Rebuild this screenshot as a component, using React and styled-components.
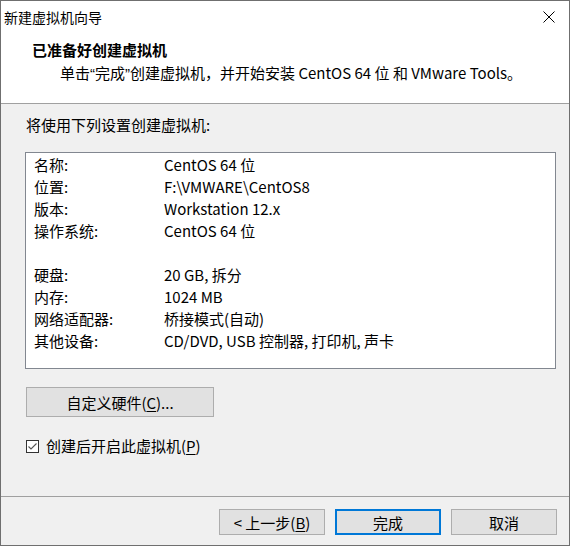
import React, { useState } from "react";
import styled, { createGlobalStyle } from "styled-components";

const GlobalStyle = createGlobalStyle`
  html, body {
    margin: 0;
    padding: 0;
    background: #f0f0f0;
  }
  * {
    box-sizing: border-box;
  }
`;

const FONT = `"Noto Sans CJK SC", "Noto Sans", sans-serif`;

const Window = styled.div`
  width: 570px;
  height: 546px;
  display: flex;
  flex-direction: column;
  border: 1px solid #6f6f6f;
  background: #f0f0f0;
  font-family: ${FONT};
  color: #000;
  overflow: hidden;
`;

const TitleBar = styled.div`
  height: 31px;
  flex: none;
  display: flex;
  align-items: center;
  justify-content: space-between;
  background: #fff;
  padding-left: 3px;
  font-size: 14px;
`;

const CloseButton = styled.div`
  width: 46px;
  height: 31px;
  display: flex;
  align-items: center;
  justify-content: center;
  margin-right: -3px;
`;

const Header = styled.div`
  height: 72px;
  flex: none;
  background: #fff;
  border-bottom: 1px solid #a0a0a0;
  padding: 7px 0 0 31px;
`;

const Heading = styled.div`
  font-size: 15px;
  font-weight: bold;
  line-height: 22px;
`;

const SubHeading = styled.div`
  font-size: 15px;
  line-height: 22px;
  padding-left: 28px;
  margin-top: 1px;
`;

const Quote = styled.span`
  font-family: "Liberation Sans", sans-serif;
`;

const Body = styled.div`
  flex: 1;
  display: flex;
  flex-direction: column;
  padding: 10px 13px 0 24px;
  font-size: 15px;
`;

const Intro = styled.div`
  line-height: 22px;
  padding-left: 1px;
`;

const SummaryBox = styled.div`
  margin-top: 16px;
  height: 217px;
  background: #fff;
  border: 1px solid #828790;
  padding: 1px 0 0 8px;
`;

const Row = styled.div`
  display: grid;
  grid-template-columns: 130px 1fr;
  height: 22px;
  line-height: 22px;
  white-space: nowrap;
`;

const Spacer = styled.div`
  height: 22px;
`;

const PushButton = styled.button`
  font-family: ${FONT};
  font-size: 15px;
  color: #000;
  background: #e1e1e1;
  border: ${({ $primary }) => ($primary ? "2px solid #0078d7" : "1px solid #adadad")};
  width: ${({ $width }) => $width}px;
  height: ${({ $height }) => $height || 26}px;
  padding: 0;
  display: flex;
  align-items: center;
  justify-content: center;
  line-height: 1;
  white-space: pre;
`;

const CustomRow = styled.div`
  margin-top: 18px;
  padding-left: 1px;
`;

const CheckRow = styled.label`
  margin-top: 18px;
  padding-left: 1px;
  display: flex;
  align-items: center;
  gap: 7px;
  line-height: 22px;
`;

const CheckBox = styled.span`
  width: 13px;
  height: 13px;
  border: 1px solid #333;
  background: #fff;
  display: flex;
  align-items: center;
  justify-content: center;
`;

const Footer = styled.div`
  height: 49px;
  flex: none;
  border-top: 1px solid #a0a0a0;
  display: flex;
  justify-content: flex-end;
  align-items: flex-start;
  padding: 12px 12px 0 0;
  gap: 10px;
`;

const Key = styled.u`
  text-underline-offset: 2px;
`;

const rows = [
  ["名称:", "CentOS 64 位"],
  ["位置:", "F:\\VMWARE\\CentOS8"],
  ["版本:", "Workstation 12.x"],
  ["操作系统:", "CentOS 64 位"],
  null,
  ["硬盘:", "20 GB, 拆分"],
  ["内存:", "1024 MB"],
  ["网络适配器:", "桥接模式(自动)"],
  ["其他设备:", "CD/DVD, USB 控制器, 打印机, 声卡"],
];

export default function App() {
  const [powerOn, setPowerOn] = useState(true);

  return (
    <>
      <GlobalStyle />
      <Window>
        <TitleBar>
          <span>新建虚拟机向导</span>
          <CloseButton>
            <svg width="12" height="12" viewBox="0 0 12 12">
              <path d="M0.5 0.5 L11.5 11.5 M11.5 0.5 L0.5 11.5" stroke="#000" strokeWidth="1" fill="none" />
            </svg>
          </CloseButton>
        </TitleBar>
        <Header>
          <Heading>已准备好创建虚拟机</Heading>
          <SubHeading>
            单击<Quote>“</Quote>完成<Quote>”</Quote>创建虚拟机，并开始安装 CentOS 64 位 和 VMware Tools。
          </SubHeading>
        </Header>
        <Body>
          <Intro>将使用下列设置创建虚拟机:</Intro>
          <SummaryBox>
            {rows.map((r, i) =>
              r ? (
                <Row key={i}>
                  <span>{r[0]}</span>
                  <span>{r[1]}</span>
                </Row>
              ) : (
                <Spacer key={i} />
              )
            )}
          </SummaryBox>
          <CustomRow>
            <PushButton $width={188} $height={30}>
              自定义硬件(<Key>C</Key>)...
            </PushButton>
          </CustomRow>
          <CheckRow onClick={() => setPowerOn(!powerOn)}>
            <CheckBox>
              {powerOn && (
                <svg width="11" height="11" viewBox="0 0 11 11">
                  <path d="M1.5 5.5 L4 8 L9.5 2.5" stroke="#555" strokeWidth="1.1" fill="none" />
                </svg>
              )}
            </CheckBox>
            <span>
              创建后开启此虚拟机(<Key>P</Key>)
            </span>
          </CheckRow>
        </Body>
        <Footer>
          <PushButton $width={106}>
            {"< 上一步("}<Key>B</Key>)
          </PushButton>
          <PushButton $width={106} $primary>
            完成
          </PushButton>
          <PushButton $width={106}>取消</PushButton>
        </Footer>
      </Window>
    </>
  );
}
